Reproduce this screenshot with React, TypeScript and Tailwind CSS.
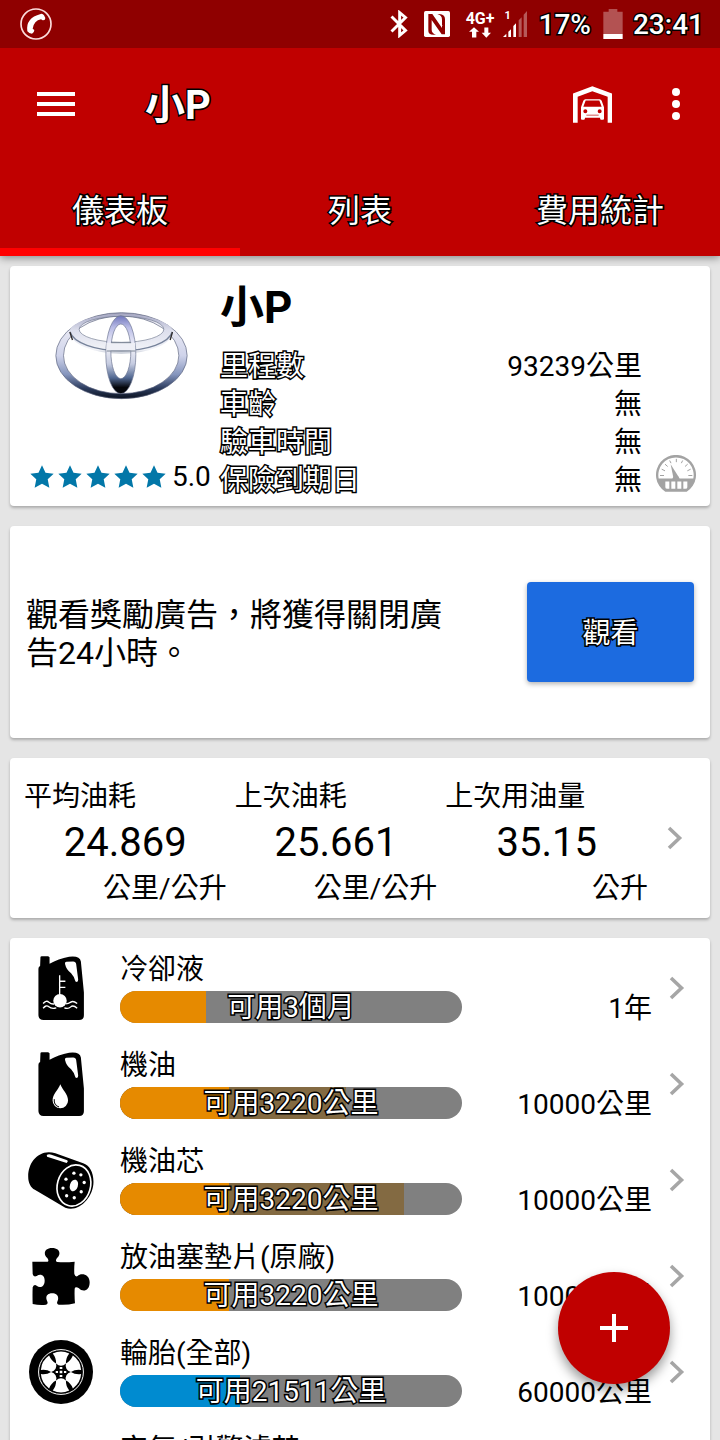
import type { ReactNode } from 'react';
import clsx from 'clsx';

const outlined = 'text-white [-webkit-text-stroke:3px_black] [paint-order:stroke_fill]';

function PhoneIcon() {
  return (
    <svg viewBox="0 0 96 96" className="h-8 w-8">
      <circle cx="48" cy="48" r="45" fill="none" stroke="#fbdcdc" strokeWidth="5" />
      <path
        fill="#fff"
        d="M62 18 Q68 16 72 22 L76 30 Q76 38 68 37 L63 34 Q42 38 38 62 L43 66 Q43 74 36 77 Q27 77 22 70 Q16 30 62 18z"
      />
    </svg>
  );
}

function BluetoothIcon() {
  return (
    <svg viewBox="0 0 54 86" className="h-7 w-[18px]" fill="none" stroke="#fff" strokeWidth="9">
      <path d="M4 20 L47 63 L29 78 V8 L47 23 L4 66" />
    </svg>
  );
}

function NfcIcon() {
  return (
    <svg viewBox="0 0 78 78" className="h-[26px] w-[26px]">
      <rect width="78" height="78" rx="5" fill="#fff" />
      <path fill="#8f0000" d="M13 70 V9 H25 L54 51 V26 Q54 12 40 9 H46 Q63 10 63 24 V70 H53 L23 27 V56 Q23 67 36 71 H28 Q13 71 13 60z" />
      <path d="M31 13 L54 44 M25 36 L48 68" stroke="#fff" strokeWidth="3" />
    </svg>
  );
}

function DataArrows() {
  return (
    <svg viewBox="0 0 66 32" className="h-[11px] w-[22px]" fill="#fff">
      <path d="M15 0 L30 14 H22 V31 H9 V14 H0z" />
      <path d="M46 1 H58 V17 H66 L52 32 L38 17 H46z" />
    </svg>
  );
}

function SignalIcon() {
  return (
    <svg viewBox="0 0 72 78" className="h-[26px] w-6">
      <path fill="#fff" d="M0 78 L10 68 V78z M16 62 L24 55 V78 H16z M31 45 L39 37 V78 H31z" />
      <path fill="#fff" fillOpacity=".35" d="M47 28 L56 19 V78 H47z M62 11 L72 0 V78 H62z" />
    </svg>
  );
}

function BatteryIcon() {
  return (
    <svg viewBox="0 0 58 90" className="h-[30px] w-5">
      <path fill="#fff" fillOpacity=".32" d="M16 0 H42 V8 H58 V75 H0 V8 H16z" />
      <path fill="#fff" d="M0 75 H58 V90 H0z" />
    </svg>
  );
}

function GarageIcon() {
  return (
    <svg viewBox="0 0 117 110" className="h-[37px] w-[39px]" fill="#fff">
      <path d="M0 22 L58 0 L117 22 V110 H104 V32 L58 15 L14 32 V110 H0z" />
      <path
        fillRule="evenodd"
        d="M37 39 H80 Q84 39 86 44 L93 63 V98 Q93 101 90 101 H84 Q81 101 81 95 H36 Q36 101 33 101 H27 Q24 101 24 98 V63 L31 44 Q33 39 37 39z M38 43 L31 62 H86 L79 43z M37 69 A6 6 0 1 0 37 81 A6 6 0 1 0 37 69z M80 69 A6 6 0 1 0 80 81 A6 6 0 1 0 80 69z"
      />
      <path d="M40 87 H77" stroke="#c00000" strokeWidth="2" />
    </svg>
  );
}

function ToyotaLogo() {
  return (
    <svg viewBox="0 0 398 264" className="h-[88px] w-[133px]" role="img" aria-label="Toyota">
      <defs>
        <linearGradient id="ring" x1="0" y1="0" x2="0" y2="1">
          <stop offset="0" stopColor="#9a9cb8" />
          <stop offset=".12" stopColor="#eeeef6" />
          <stop offset=".5" stopColor="#cfd3ea" />
          <stop offset=".72" stopColor="#8494bc" />
          <stop offset=".88" stopColor="#2c3c5e" />
          <stop offset="1" stopColor="#0b1220" />
        </linearGradient>
        <linearGradient id="band" x1="0" y1="0" x2="0" y2="1">
          <stop offset="0" stopColor="#a8aac6" />
          <stop offset=".4" stopColor="#dcdeec" />
          <stop offset=".9" stopColor="#f2f3f8" />
          <stop offset="1" stopColor="#c0c6d2" />
        </linearGradient>
        <linearGradient id="loop" x1="0" y1="0" x2="0" y2="1">
          <stop offset="0" stopColor="#6f75bb" />
          <stop offset=".15" stopColor="#b9bce6" />
          <stop offset=".4" stopColor="#f4f4fa" />
          <stop offset=".62" stopColor="#c5cbe0" />
          <stop offset=".8" stopColor="#4f6690" />
          <stop offset=".92" stopColor="#05070c" />
        </linearGradient>
      </defs>
      <g fillRule="evenodd" fill="none">
        <path
          fill="url(#ring)"
          stroke="#59617c"
          strokeWidth="2"
          d="M2 131 A197 129 0 0 1 396 131 A197 129 0 0 1 2 131z M25 131 A173 114 0 0 0 371 131 A173 119 0 0 0 25 131z"
        />
        <path
          fill="url(#band)"
          d="M44 60 A154 52 0 0 1 352 60 A154 65 0 0 1 44 60z M72 52 A127 40 0 0 0 326 52 A127 40 0 0 0 72 52z"
        />
        <ellipse cx="199" cy="52" rx="127" ry="39" stroke="#6f7890" strokeWidth="2" />
        <path d="M45 60 A154 63 0 0 0 351 60" stroke="#76829a" strokeWidth="4" />
        <path d="M44 60 L52 84 M352 60 L345 84" stroke="#2f2c2c" strokeWidth="4" />
        <path
          fill="url(#loop)"
          stroke="#6a738f"
          strokeWidth="2"
          d="M152 128 A45 117 0 0 1 242 128 A45 117 0 0 1 152 128z M167 118 A30 82 0 0 0 227 118 A30 82 0 0 0 167 118z"
        />
        <path fill="#eeeff6" d="M154 93 H240 V116 H154z" />
        <path d="M168 92 H228 M155 117 H240" stroke="#7b8494" strokeWidth="3" />
      </g>
    </svg>
  );
}

function Star() {
  return (
    <svg viewBox="0 0 24 24" className="h-7 w-7" fill="#0277a8">
      <path d="M12 2 L15 8.4 L22 9.3 L16.9 14 L18.3 21.2 L12 17.8 L5.7 21.2 L7.1 14 L2 9.3 L9 8.4z" />
    </svg>
  );
}

function GaugeIcon() {
  return (
    <svg viewBox="0 0 120 110" className="h-[37px] w-10">
      <path fill="#a3a3a3" d="M28 110 A60 60 0 1 1 92 110z" />
      <path fill="#fff" d="M8 70 A53 53 0 1 1 112 70 H71 A12 12 0 0 0 49 70z" />
      <path
        stroke="#a3a3a3"
        strokeWidth="3"
        d="M12 61 H24 M17 42 L27 47 M27 27 L35 34 M41 16 L45 24 M61 11 V21 M80 16 L76 24 M95 27 L87 34 M104 42 L94 47 M109 61 H97"
      />
      <path fill="#a3a3a3" d="M44 27 L69 67 L53 72z" />
      <path fill="#fff" d="M28 79 H40 V101 H34 Q28 101 28 96z M46 79 H58 V101 H46z M64 79 H76 V101 H64z M82 79 H94 V96 Q94 101 88 101 H82z" />
    </svg>
  );
}

function Jug({ children }: { children: ReactNode }) {
  return (
    <svg viewBox="0 0 136 190" className="h-16 w-[46px]">
      <path d="M7 4 Q7 1 11 1 H30 L34 4 V23 Q60 8 92 2 Q124 -2 127 16 L136 108 V176 Q136 190 122 190 H16 Q2 190 1 176 V38 Q1 32 6 30z" />
      <path fill="#fff" d="M80 24 Q78 18 84 17 L104 16 Q112 16 113 24 L119 70 Q119 80 111 76 Q107 60 98 51 Q84 42 80 24z" />
      {children}
    </svg>
  );
}

function CoolantIcon() {
  return (
    <Jug>
      <circle cx="65" cy="133" r="20" fill="#fff" />
      <path
        fill="none"
        stroke="#fff"
        strokeWidth="4"
        d="M64 57 V118 M66 75 H81 M66 93 H81 M15 141 Q24 130 32 137 T48 142 M15 155 Q24 144 32 151 T54 154 M82 142 Q90 142 97 137 T116 141 M78 154 Q90 158 97 151 T116 155"
      />
    </Jug>
  );
}

function OilIcon() {
  return (
    <Jug>
      <path fill="#fff" d="M66 96 C60 112 43 126 43 144 A23 23 0 0 0 89 144 C89 126 72 112 66 96z" />
      <path fill="none" stroke="#000" strokeWidth="3" d="M48 140 Q46 158 62 163" />
    </Jug>
  );
}

function OilFilterIcon() {
  return (
    <svg viewBox="0 0 198 172" className="h-[57px] w-[66px]">
      <path d="M62 1 C24 2 0 36 0 74 C0 94 8 108 20 114 L112 168 C150 184 197 140 197 90 C197 60 184 40 166 34 L82 4 Q72 1 62 1z" />
      <path fill="#fff" d="M56 9 Q62 5 70 8 L118 25 Q122 28 116 33 L57 14z" />
      <ellipse cx="138" cy="101" rx="50" ry="63" transform="rotate(16 138 101)" fill="none" stroke="#fff" strokeWidth="5" />
      <ellipse cx="138" cy="101" rx="12" ry="18" transform="rotate(18 138 101)" fill="#fff" />
      <g fill="#fff">
        <circle cx="138" cy="64" r="5" />
        <circle cx="159" cy="69" r="5" />
        <circle cx="169" cy="92" r="5" />
        <circle cx="160" cy="120" r="5" />
        <circle cx="139" cy="138" r="5" />
        <circle cx="116" cy="132" r="5" />
        <circle cx="105" cy="109" r="5" />
        <circle cx="114" cy="82" r="5" />
      </g>
    </svg>
  );
}

function PuzzleIcon() {
  return (
    <svg viewBox="0 0 174 171" className="h-[57px] w-[58px]">
      <path d="M1 41 Q30 42 47 41 Q52 40 46 30 C32 18 38 0 60 0 C84 0 88 18 75 30 Q68 40 76 42 Q100 44 128 41 Q126 60 127 78 Q130 88 137 84 C145 74 173 76 173 103 C173 132 150 132 141 121 Q130 114 128 122 Q127 145 129 166 Q105 172 80 170 Q72 168 77 158 C82 145 74 136 60 136 C44 136 40 148 45 158 Q50 168 42 170 Q22 172 2 168 Q1 140 2 118 Q6 108 14 113 C24 122 38 116 38 98 C38 82 26 76 14 84 Q4 88 2 78z" />
    </svg>
  );
}

function WheelIcon() {
  return (
    <svg viewBox="-97 -97 194 194" className="h-16 w-16">
      <circle r="97" />
      <circle r="68" fill="none" stroke="#fff" strokeWidth="3" />
      {[0, 60, 120, 180, 240, 300].map((angle) => (
        <path
          key={angle}
          fill="#fff"
          transform={`rotate(${angle})`}
          d="M-25 -56 Q0 -68 25 -56 Q14 -42 15 -26 Q8 -19 0 -19 Q-8 -19 -15 -26 Q-14 -42 -25 -56z"
        />
      ))}
      <path fill="#fff" d="M-4 -4 H4 V4 H-4z M-4 -15 H4 V-9 H-4z M-4 9 H4 V15 H-4z M-16 -3 H-9 V3 H-16z M9 -3 H16 V3 H9z" />
    </svg>
  );
}

function AirFilterIcon() {
  return (
    <svg viewBox="0 0 60 48" className="h-12 w-[60px]">
      <path fillRule="evenodd" d="M4 0 H56 Q60 0 60 4 V44 Q60 48 56 48 H4 Q0 48 0 44 V4 Q0 0 4 0z M8 8 V40 H12 V8z M20 8 V40 H24 V8z M32 8 V40 H36 V8z M44 8 V40 H48 V8z" />
    </svg>
  );
}

function Chevron() {
  return (
    <svg viewBox="0 0 16 24" className="h-6 w-4" fill="none" stroke="#a6a6a6" strokeWidth="3.6">
      <path d="M2 2 L12.5 12 L2 22" />
    </svg>
  );
}

function Card({ className, children }: { className?: string; children: ReactNode }) {
  return (
    <section className={clsx('rounded-sm bg-white shadow-[0_2px_3px_rgba(0,0,0,0.25)]', className)}>
      {children}
    </section>
  );
}

const details = [
  { label: '里程數', value: '93239公里' },
  { label: '車齡', value: '無' },
  { label: '驗車時間', value: '無' },
  { label: '保險到期日', value: '無' },
];

const stats = [
  { label: '平均油耗', value: '24.869', unit: '公里/公升' },
  { label: '上次油耗', value: '25.661', unit: '公里/公升' },
  { label: '上次用油量', value: '35.15', unit: '公升' },
];

const parts = [
  { name: '冷卻液', icon: <CoolantIcon />, left: '可用3個月', interval: '1年', used: 25, extra: 0, color: 'bg-[#e68a00]' },
  { name: '機油', icon: <OilIcon />, left: '可用3220公里', interval: '10000公里', used: 32, extra: 66, color: 'bg-[#e68a00]' },
  { name: '機油芯', icon: <OilFilterIcon />, left: '可用3220公里', interval: '10000公里', used: 32, extra: 83, color: 'bg-[#e68a00]' },
  { name: '放油塞墊片(原廠)', icon: <PuzzleIcon />, left: '可用3220公里', interval: '10000公里', used: 32, extra: 0, color: 'bg-[#e68a00]' },
  { name: '輪胎(全部)', icon: <WheelIcon />, left: '可用21511公里', interval: '60000公里', used: 35, extra: 0, color: 'bg-[#008bd0]' },
  { name: '空氣/引擎濾芯', icon: <AirFilterIcon />, left: '可用3220公里', interval: '10000公里', used: 32, extra: 0, color: 'bg-[#e68a00]' },
];

function StatusBar() {
  return (
    <div className="flex h-12 items-center bg-[#8f0000] pr-4 pl-5 text-[28px] leading-8 font-medium">
      <PhoneIcon />
      <div className="ml-auto flex items-center">
        <BluetoothIcon />
        <div className="ml-4">
          <NfcIcon />
        </div>
        <div className="ml-4 flex flex-col items-center">
          <span className="text-base leading-4 font-bold text-white">4G+</span>
          <DataArrows />
        </div>
        <div className="relative ml-2">
          <SignalIcon />
          <span className="absolute top-0 left-0.5 text-[11px] leading-[10px] font-bold text-white">1</span>
        </div>
        <span className={clsx('ml-3 pt-0.5', outlined)}>17%</span>
        <div className="ml-3">
          <BatteryIcon />
        </div>
        <span className={clsx('ml-2.5 pt-0.5', outlined)}>23:41</span>
      </div>
    </div>
  );
}

function Header() {
  return (
    <header className="relative z-10 shrink-0 bg-[#c00000] shadow-[0_2px_8px_rgba(0,0,0,0.4)]">
      <StatusBar />
      <div className="flex h-28 items-center pr-10 pl-[37px]">
        <button type="button" aria-label="選單" className="flex w-[38px] flex-col gap-1.5">
          <span className="h-1 bg-white" />
          <span className="h-1 bg-white" />
          <span className="h-1 bg-white" />
        </button>
        <h1 className={clsx('ml-[70px] flex-1 pt-1 text-[40px] leading-12 font-bold', outlined)}>小P</h1>
        <button type="button" aria-label="車庫">
          <GarageIcon />
        </button>
        <button type="button" aria-label="更多" className="ml-[60px] flex flex-col gap-1">
          <span className="h-2 w-2 rounded-full bg-white" />
          <span className="h-2 w-2 rounded-full bg-white" />
          <span className="h-2 w-2 rounded-full bg-white" />
        </button>
      </div>
      <nav className="grid h-24 grid-cols-3">
        {['儀表板', '列表', '費用統計'].map((tab, i) => (
          <button
            key={tab}
            type="button"
            className={clsx('border-b-8 pt-3.5 text-[32px] leading-10', outlined, i === 0 ? 'border-[#ff0000]' : 'border-transparent')}
          >
            {tab}
          </button>
        ))}
      </nav>
    </header>
  );
}

function VehicleCard() {
  return (
    <Card className="flex pb-1.5">
      <div className="flex w-[210px] shrink-0 flex-col pb-1">
        <div className="flex flex-1 items-center justify-center pb-3 pl-3">
          <ToyotaLogo />
        </div>
        <div className="flex h-[38px] items-center pl-[18px]">
          <Star />
          <Star />
          <Star />
          <Star />
          <Star />
          <span className="ml-1">5.0</span>
        </div>
      </div>
      <div className="flex-1 pt-0.5">
        <h2 className="flex h-20 items-center text-[44px] font-bold">小P</h2>
        <dl>
          {details.map((d) => (
            <div key={d.label} className="flex justify-between">
              <dt className={outlined}>{d.label}</dt>
              <dd>{d.value}</dd>
            </div>
          ))}
        </dl>
      </div>
      <button type="button" aria-label="里程" className="mx-3.5 mb-2 self-end">
        <GaugeIcon />
      </button>
    </Card>
  );
}

function RewardCard() {
  return (
    <Card className="flex items-center px-4 py-14">
      <p className="mr-[60px] flex-1 pt-1 text-[32px]">觀看獎勵廣告，將獲得關閉廣告24小時。</p>
      <button
        type="button"
        className={clsx('h-[100px] w-[167px] rounded-sm bg-[#1c6be0] pt-1 shadow-[0_2px_5px_rgba(0,0,0,0.3)]', outlined)}
      >
        觀看
      </button>
    </Card>
  );
}

function StatsCard() {
  return (
    <Card className="flex items-center pl-3.5">
      <div className="grid flex-1 grid-cols-3 gap-2 pt-5 pb-2.5">
        {stats.map((s) => (
          <div key={s.label}>
            <div>{s.label}</div>
            <div className="text-center text-[40px] leading-[54px]">{s.value}</div>
            <div className="text-right">{s.unit}</div>
          </div>
        ))}
      </div>
      <button type="button" aria-label="油耗明細" className="flex w-[62px] justify-center pr-2">
        <Chevron />
      </button>
    </Card>
  );
}

function PartsCard() {
  return (
    <Card className="pt-0.5">
      <ul>
        {parts.map((p) => (
          <li key={p.name} className="flex h-24 items-center pl-[18px]">
            <div className="flex w-[66px] shrink-0 justify-center">{p.icon}</div>
            <div className="ml-[26px] flex-1 self-start pt-[11px]">
              <div>{p.name}</div>
              <div
                role="progressbar"
                aria-label={p.name}
                aria-valuenow={p.used}
                className="relative mt-0.5 h-8 overflow-hidden rounded-full bg-[#808080]"
              >
                <div className="absolute inset-y-0 left-0 bg-[#836a42]" style={{ width: `${p.extra}%` }} />
                <div className={clsx('absolute inset-y-0 left-0', p.color)} style={{ width: `${p.used}%` }} />
                <div className={clsx('relative text-center leading-[34px]', outlined)}>{p.left}</div>
              </div>
            </div>
            <div className="w-[190px] self-end pb-2 text-right">{p.interval}</div>
            <button type="button" aria-label={`${p.name}明細`} className="flex w-[58px] justify-center pr-2">
              <Chevron />
            </button>
          </li>
        ))}
      </ul>
    </Card>
  );
}

export default function App() {
  return (
    <div
      lang="zh-TW"
      className="relative flex h-screen flex-col overflow-hidden bg-[#e5e5e5] font-[Roboto,'Noto_Sans_CJK_TC',sans-serif] text-[28px] leading-[38px] text-black"
    >
      <Header />
      <main className="flex flex-1 flex-col gap-5 overflow-hidden px-2.5 pt-2.5 *:shrink-0">
        <VehicleCard />
        <RewardCard />
        <StatsCard />
        <PartsCard />
      </main>
      <button
        type="button"
        aria-label="新增"
        className="absolute right-[50px] bottom-14 z-20 flex h-28 w-28 items-center justify-center rounded-full bg-[#c00000] shadow-[0_6px_12px_rgba(0,0,0,0.4)]"
      >
        <svg viewBox="0 0 28 28" className="h-7 w-7" stroke="#fff" strokeWidth="4">
          <path d="M14 0 V28 M0 14 H28" />
        </svg>
      </button>
    </div>
  );
}
